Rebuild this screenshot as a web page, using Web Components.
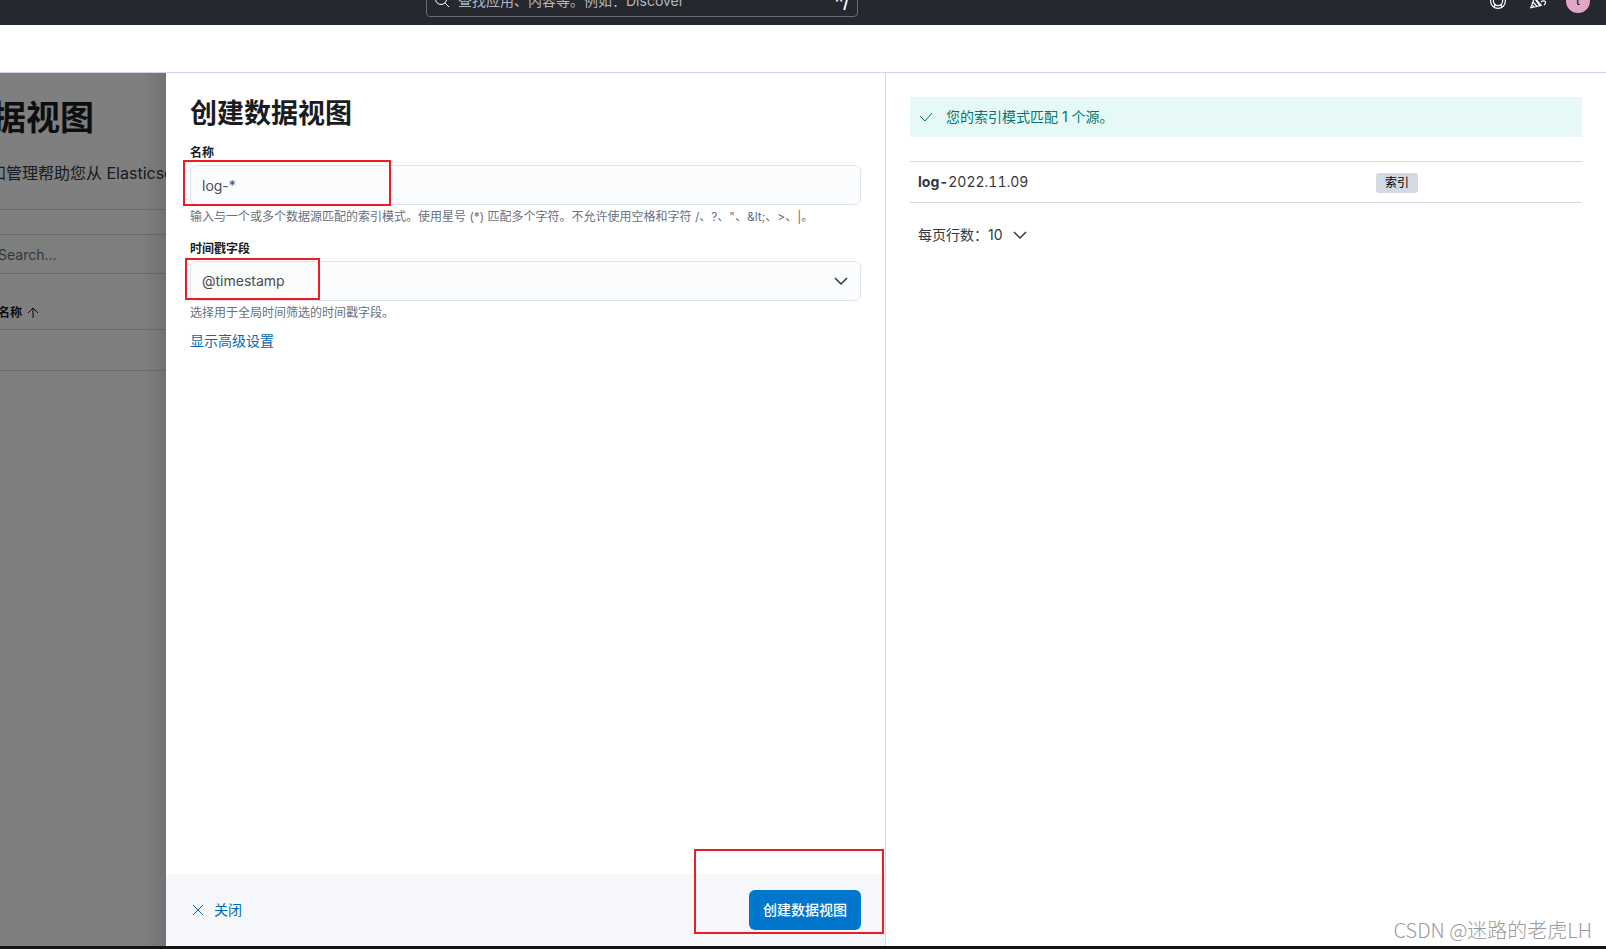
<!DOCTYPE html>
<html lang="zh-CN">
<head>
<meta charset="utf-8">
<title>创建数据视图</title>
<style>
html, body { margin: 0; }
body {
  font-family: Inter, "Noto Sans CJK SC", sans-serif;
  font-size: 14px;
  line-height: 20px;
  color: #343741;
  background: #fff;
  --border: #d3dae6;
  --primary: #0077cc;
  --link: #006bb8;
  --title: #1a1c21;
}
</style>
</head>
<body>
<app-shell>
  <global-header slot="header"></global-header>
  <views-page slot="page"></views-page>
  <view-flyout slot="flyout"></view-flyout>
</app-shell>

<script>
const define = (name, html) => {
  const template = document.createElement('template');
  template.innerHTML = `<style>*{box-sizing:border-box}</style>${html}`;
  customElements.define(name, class extends HTMLElement {
    constructor() {
      super();
      this.attachShadow({ mode: 'open' }).append(template.content.cloneNode(true));
    }
  });
};

define('app-shell', `
<style>
:host { display: flex; flex-direction: column; min-height: 100vh; position: relative; border-bottom: 3px solid #141214; box-sizing: border-box; }
.crumbs { height: 48px; border-bottom: 1px solid #cfd4e6; }
main { flex: 1; display: grid; grid-template-columns: 166px minmax(0, 1fr); }
.mark { position: absolute; right: 14px; bottom: 0; font-size: 20px; line-height: 32px; color: #9b9b9b; font-family: "Noto Sans CJK SC", sans-serif; font-weight: 300; }
</style>
<slot name="header"></slot>
<div class="crumbs"></div>
<main><slot name="page"></slot><slot name="flyout"></slot></main>
<div class="mark">CSDN @迷路的老虎LH</div>`);

define('global-header', `
<style>
:host { display: flex; align-items: flex-end; height: 25px; overflow: hidden; background: #25282f; color: #fff; flex: none; }
.bar { display: flex; align-items: center; width: 100%; height: 48px; flex: none; padding: 0 16px 0 426px; }
label { display: flex; align-items: center; width: 432px; height: 32px; border: 1px solid #6a6c72; border-radius: 4px; padding: 0 8px 2px 7px; gap: 8px; }
input { flex: 1; min-width: 0; border: 0; background: none; font: inherit; color: #fff; padding: 0; outline: 0; height: 28px; }
input::placeholder { color: #b4b7be; opacity: 1; }
kbd { font: 600 16px/20px Inter, sans-serif; padding-top: 4px; }
svg { display: block; fill: none; stroke: currentColor; }
.tools { margin-left: auto; display: flex; gap: 4px; }
button { border: 0; background: none; padding: 0; width: 36px; height: 24px; display: grid; place-items: center; color: #fff; font: 12px/24px Inter, sans-serif; }
.avatar { width: 24px; border-radius: 50%; background: #e4a6c7; color: #000; margin-left: 6px; }
</style>
<header class="bar">
  <label aria-label="搜索">
    <svg width="16" height="16" viewBox="0 0 16 16"><circle cx="7" cy="7" r="5.5"/><path d="M11 11l4 4"/></svg>
    <input type="search" placeholder="查找应用、内容等。例如：Discover">
    <kbd>^/</kbd>
  </label>
  <div class="tools">
    <button aria-label="帮助"><svg width="16" height="16" viewBox="0 0 16 16" stroke-width="1.2"><circle cx="8" cy="8" r="7.4"/><circle cx="8" cy="8" r="4.6"/><path d="M3 3l2 2M13 3l-2 2M4 14l1.500-3M12 14l-1.500-3"/></svg></button>
    <button aria-label="新闻"><svg width="16" height="16" viewBox="0 0 16 16" stroke-width="1.2"><path d="M4.500 4.500L.7 14.800l10.600-2.300zM3 9l4 4.500M5 6l4.500 6.500M2 12l2 2M9 6c2-3 0-4 0-5M11 9c2-2 4.500-1 4.500.5S14.500 11.500 14 12"/></svg></button>
    <button class="avatar">t</button>
  </div>
</header>`);

define('views-page', `
<style>
:host { display: block; position: relative; overflow: hidden; min-width: 0; }
.scrim { position: absolute; inset: 0; background: linear-gradient(90deg, rgba(0,0,0,0) 85%, rgba(0,0,0,.1)), rgba(0,0,0,.5); }
.page { margin-left: -42px; padding-top: 25px; width: 600px; }
h1 { margin: 0; font-size: 34px; line-height: 40px; font-weight: 700; color: var(--title); }
p { margin: 23px 0 24px; font-size: 16px; line-height: 24px; white-space: nowrap; }
.search { border-top: 1px solid var(--border); padding-top: 24px; }
input { display: block; width: 100%; height: 40px; border: 1px solid #cfd7e6; background: #fbfcfd; font: inherit; padding: 0 39px; }
input::placeholder { color: #69707d; opacity: 1; }
table { width: 100%; border-collapse: collapse; margin-top: 24px; }
th { text-align: left; font-size: 12px; line-height: 16px; font-weight: 600; color: var(--title); padding: 7px 0 7px 40px; height: 31px; border-bottom: 1px solid var(--border); }
td { height: 41px; border-bottom: 1px solid var(--border); }
th span { display: flex; align-items: center; gap: 4px; }
svg { fill: none; stroke: currentColor; }
</style>
<section class="page">
  <h1>数据视图</h1>
  <p>创建和管理帮助您从 Elasticsearch 检索数据的数据视图。</p>
  <div class="search"><input type="search" placeholder="Search..." aria-label="Search"></div>
  <table><thead><tr><th><span>名称 <svg width="14" height="14" viewBox="0 0 14 14"><path d="M7 12V2M2 7l5-5 5 5"/></svg></span></th></tr></thead><tbody><tr><td></td></tr></tbody></table>
</section>
<div class="scrim"></div>`);

define('view-flyout', `
<style>
:host { display: grid; grid-template-columns: minmax(0, 1fr) minmax(0, 1fr); background: #fff; }
.edit { display: flex; flex-direction: column; border-right: 1px solid #d3d6e3; }
form { flex: 1; padding: 25px 24px 24px; }
h2 { margin: 0 0 15px; font-size: 27px; line-height: 32px; font-weight: 700; color: var(--title); }
.fields { display: grid; gap: 16px; margin-bottom: 10px; }
a { display: inline-block; color: var(--link); text-decoration: none; }
footer { position: relative; display: flex; align-items: center; justify-content: space-between; height: 72px; padding: 0 24px; background: #f5f7fa; }
button { font: inherit; border: 0; background: none; padding: 0; }
.close { display: flex; align-items: center; gap: 8px; color: var(--link); }
.save { width: 112px; height: 40px; border-radius: 6px; background: var(--primary); color: #fff; font-weight: 500; }
.ring { position: absolute; right: 1px; bottom: 12px; width: 190px; height: 85px; border: 2px solid #ed1c24; pointer-events: none; }
svg { fill: none; stroke: currentColor; }
</style>
<div class="edit">
  <form>
    <h2>创建数据视图</h2>
    <div class="fields">
      <form-field kind="text" label="名称" value="log-*">输入与一个或多个数据源匹配的索引模式。使用星号 (*) 匹配多个字符。不允许使用空格和字符 /、?、"、&amp;lt;、&gt;、|。</form-field>
      <form-field kind="select" label="时间戳字段" value="@timestamp">选择用于全局时间筛选的时间戳字段。</form-field>
    </div>
    <a href="#advanced">显示高级设置</a>
  </form>
  <footer>
    <button class="close"><svg width="16" height="16" viewBox="0 0 16 16"><path d="M3 3l10 10M13 3L3 13"/></svg>关闭</button>
    <button class="save">创建数据视图</button>
    <div class="ring"></div>
  </footer>
</div>
<match-panel></match-panel>`);

customElements.define('form-field', class extends HTMLElement {
  connectedCallback() {
    const value = this.getAttribute('value');
    const select = this.getAttribute('kind') === 'select';
    const control = select
      ? `<select id="c"><option>${value}</option></select><svg width="16" height="16" viewBox="0 0 16 16"><path d="M2 5l6 6 6-6"/></svg>`
      : `<input id="c" type="text" value="${value}">`;
    this.attachShadow({ mode: 'open' }).innerHTML = `
<style>
* { box-sizing: border-box; }
:host { display: block; }
label { display: block; font-size: 12px; line-height: 16px; font-weight: 600; color: var(--title); margin-bottom: 4px; }
.control { position: relative; }
input, select { display: block; appearance: none; width: 100%; height: 40px; padding: 0 11px; border: 1px solid #e0e4f0; border-radius: 6px; background: #fbfcfd; font: inherit; color: #4a4d56; outline: 0; }
svg { position: absolute; right: 12px; top: 12px; fill: none; stroke: #343741; stroke-width: 1.5; pointer-events: none; }
.help { font-size: 12px; line-height: 16px; color: #69707d; padding-top: 4px; }
.ring { position: absolute; border: 2px solid #ed1c24; pointer-events: none; }
.text { left: -7px; top: -5px; width: 208px; height: 46px; }
.select { left: -5px; top: -3px; width: 135px; height: 42px; }
</style>
<label for="c">${this.getAttribute('label')}</label>
<div class="control">${control}<div class="ring ${this.getAttribute('kind')}"></div></div>
<div class="help"><slot></slot></div>`;
  }
});

define('match-panel', `
<style>
:host { display: block; padding: 24px; }
.callout { display: flex; align-items: center; gap: 12px; height: 40px; padding: 0 8px; background: #e6f9f7; color: #007871; margin-bottom: 24px; }
svg { fill: none; stroke: currentColor; flex: none; }
table { width: 100%; border-collapse: collapse; table-layout: fixed; font-variant-numeric: tabular-nums; }
td { height: 41px; padding: 0 8px; border: solid var(--border); border-width: 1px 0; }
td:first-child { width: 68%; }
td:last-child { padding-left: 9px; }
strong { font-weight: 700; }
.badge { display: inline-block; padding: 0 9px; border-radius: 3px; background: var(--border); color: #000; font-size: 12px; line-height: 20px; vertical-align: middle; }
.pager { display: flex; align-items: center; gap: 9px; margin: 22px 0 0 8px; padding: 0; border: 0; background: none; font: inherit; color: inherit; }
.pager svg { stroke-width: 1.5; }
</style>
<div class="callout"><svg width="16" height="16" viewBox="0 0 16 16"><path d="M2 7l5 5 7-8"/></svg><span>您的索引模式匹配 1 个源。</span></div>
<table><tbody><tr><td><strong>log-</strong>2022.11.09</td><td><span class="badge">索引</span></td></tr></tbody></table>
<button class="pager">每页行数：10<svg width="16" height="16" viewBox="0 0 16 16"><path d="M2 5l6 6 6-6"/></svg></button>`);
</script>
</body>
</html>
